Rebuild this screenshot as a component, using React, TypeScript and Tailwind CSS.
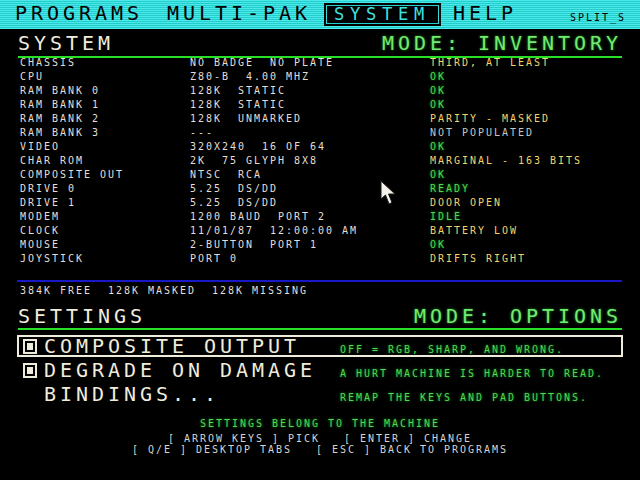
import React, { FC } from "react";

// Shared type styles: 16px cells for the big face, 8px cells for the small one
const big = "text-[20px] tracking-[3.96px] leading-[24px]";
const small = "text-[10px] tracking-[1.98px] leading-[14px]";
const glowGreen = "[text-shadow:0_0_3px_#1c8c1c]";

type Row = { label: string; value: string; status: string; tone: "ok" | "warn" | "dim" };

const rows: Row[] = [
  { label: "CHASSIS", value: "NO BADGE  NO PLATE", status: "THIRD, AT LEAST", tone: "warn" },
  { label: "CPU", value: "Z80-B  4.00 MHZ", status: "OK", tone: "ok" },
  { label: "RAM BANK 0", value: "128K  STATIC", status: "OK", tone: "ok" },
  { label: "RAM BANK 1", value: "128K  STATIC", status: "OK", tone: "ok" },
  { label: "RAM BANK 2", value: "128K  UNMARKED", status: "PARITY - MASKED", tone: "warn" },
  { label: "RAM BANK 3", value: "---", status: "NOT POPULATED", tone: "dim" },
  { label: "VIDEO", value: "320X240  16 OF 64", status: "OK", tone: "ok" },
  { label: "CHAR ROM", value: "2K  75 GLYPH 8X8", status: "MARGINAL - 163 BITS", tone: "warn" },
  { label: "COMPOSITE OUT", value: "NTSC  RCA", status: "OK", tone: "ok" },
  { label: "DRIVE 0", value: "5.25  DS/DD", status: "READY", tone: "ok" },
  { label: "DRIVE 1", value: "5.25  DS/DD", status: "DOOR OPEN", tone: "warn" },
  { label: "MODEM", value: "1200 BAUD  PORT 2", status: "IDLE", tone: "ok" },
  { label: "CLOCK", value: "11/01/87  12:00:00 AM", status: "BATTERY LOW", tone: "warn" },
  { label: "MOUSE", value: "2-BUTTON  PORT 1", status: "OK", tone: "ok" },
  { label: "JOYSTICK", value: "PORT 0", status: "DRIFTS RIGHT", tone: "warn" },
];

const toneClass = {
  ok: `text-[#4fd84f] ${glowGreen}`,
  warn: "text-[#f2d46a]",
  dim: "text-[#c6c6c0]",
};

type Setting = { name: string; hint: string; box: boolean; selected?: boolean };

const settings: Setting[] = [
  { name: "COMPOSITE OUTPUT", hint: "OFF = RGB, SHARP, AND WRONG.", box: true, selected: true },
  { name: "DEGRADE ON DAMAGE", hint: "A HURT MACHINE IS HARDER TO READ.", box: true },
  { name: "BINDINGS...", hint: "REMAP THE KEYS AND PAD BUTTONS.", box: false },
];

const MenuBar: FC = () => (
  <div className="h-[29px] flex items-start pl-[15px] text-black bg-[repeating-linear-gradient(to_bottom,#4aeaea_0px,#4aeaea_1px,#24cccc_1px,#24cccc_2px)]">
    <span className={`${big} mt-[1px]`}>PROGRAMS</span>
    <span className={`${big} mt-[1px] ml-[24px]`}>MULTI-PAK</span>
    <div className="ml-[13px] mt-[3px] w-[117px] h-[23px] border-2 border-black p-[1px]">
      <div className="h-full bg-black text-[#3ee0e0] pl-[7px] text-[17px] tracking-[5.76px] leading-[17px]">
        SYSTEM
      </div>
    </div>
    <span className={`${big} mt-[1px] ml-[12px]`}>HELP</span>
    <span className={`${small} mt-[11px] ml-[53px]`}>SPLIT_S</span>
  </div>
);

const Checkbox: FC = () => (
  <div className="w-[14px] h-[15px] border-2 border-[#f0ecdc] p-[2px] bg-black">
    <div className="w-full h-full bg-[#f0ecdc]" />
  </div>
);

export default function App() {
  return (
    <div className="relative w-[640px] h-[480px] bg-black overflow-hidden font-['DejaVu_Sans_Mono',monospace] text-[#e2dfd6]">
      <MenuBar />

      <div className="px-[18px]">
        {/* system inventory */}
        <div className="flex justify-between mt-[2px]">
          <span className={`${big} text-[#f0ecdc]`}>SYSTEM</span>
          <span className={`${big} text-[#72ea72] ${glowGreen}`}>MODE: INVENTORY</span>
        </div>
        <div className="h-[2px] mt-[1px] bg-[#28e028]" />

        <div className="-mt-[2px] pl-[2px]">
          {rows.map((r) => (
            <div key={r.label} className={`${small} flex whitespace-pre`}>
              <span className="w-[170px]">{r.label}</span>
              <span className="w-[240px]">{r.value}</span>
              <span className={toneClass[r.tone]}>{r.status}</span>
            </div>
          ))}
        </div>

        <div className="h-[2px] mt-[14px] -ml-[1px] bg-[#1818c8]" />
        <div className={`${small} mt-[2px] pl-[2px] whitespace-pre`}>384K FREE  128K MASKED  128K MISSING</div>

        {/* settings */}
        <div className="flex justify-between mt-[6px]">
          <span className={`${big} text-[#f0ecdc]`}>SETTINGS</span>
          <span className={`${big} text-[#72ea72] ${glowGreen}`}>MODE: OPTIONS</span>
        </div>
        <div className="h-[2px] bg-[#28e028]" />
      </div>

      <div className="mt-[5px] mx-[17px] flex flex-col gap-[2px]">
        {settings.map((s) => (
          <div
            key={s.name}
            className={`h-[22px] border-2 flex items-baseline ${
              s.selected ? "border-[#f0ecdc]" : "border-transparent"
            }`}
          >
            <div className="w-[321px] flex items-baseline">
              <div className="ml-[4px] w-[14px] self-center">{s.box && <Checkbox />}</div>
              <span className="ml-[7px] text-[20px] tracking-[3.96px] leading-[18px] text-[#f0ecdc]">
                {s.name}
              </span>
            </div>
            <span className={`${small} text-[#4fd84f] ${glowGreen}`}>{s.hint}</span>
          </div>
        ))}
      </div>

      {/* key help */}
      <div className="mt-[12px] flex flex-col items-center text-[#d4d4d0] whitespace-pre">
        <div className={`${small} text-[#4fd84f] ${glowGreen}`}>SETTINGS BELONG TO THE MACHINE</div>
        <div className="text-[10px] tracking-[1.98px] leading-[11px] mt-[2px]">[ ARROW KEYS ] PICK   [ ENTER ] CHANGE</div>
        <div className="text-[10px] tracking-[1.98px] leading-[11px]">[ Q/E ] DESKTOP TABS   [ ESC ] BACK TO PROGRAMS</div>
      </div>

      {/* pointer */}
      <svg className="absolute left-[380px] top-[180px]" width="17" height="26" viewBox="0 0 17 26">
        <path d="M1 1 L1 19 L5.5 15 L9 24 L12 22.5 L8.5 14 L15 14 Z" fill="#f4f2ea" stroke="#1a1a1a" strokeWidth="1" />
      </svg>
    </div>
  );
}
